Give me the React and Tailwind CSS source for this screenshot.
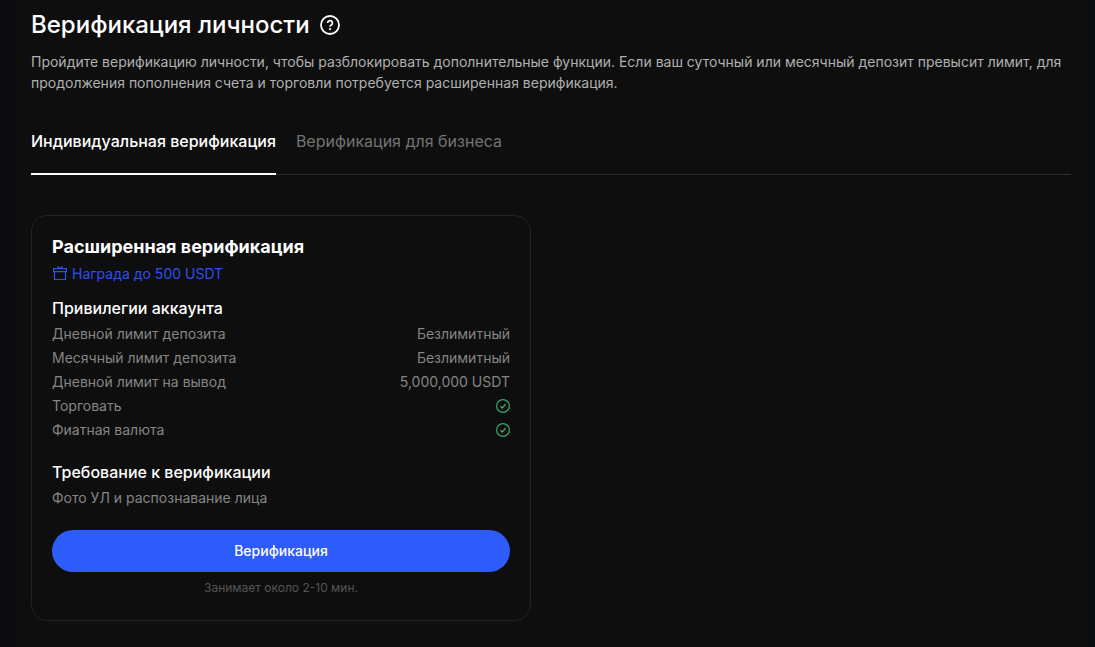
import { useState } from 'react';

const tabs = [
  { id: 'personal', label: 'Индивидуальная верификация' },
  { id: 'business', label: 'Верификация для бизнеса' },
];

const privileges = [
  { label: 'Дневной лимит депозита', value: 'Безлимитный' },
  { label: 'Месячный лимит депозита', value: 'Безлимитный' },
  { label: 'Дневной лимит на вывод', value: '5,000,000 USDT' },
  { label: 'Торговать', allowed: true },
  { label: 'Фиатная валюта', allowed: true },
];

function HelpIcon() {
  return (
    <svg className="w-5 h-5" viewBox="0 0 20 20" fill="none" stroke="currentColor" strokeWidth="1.8" aria-hidden="true">
      <circle cx="10" cy="10" r="9" />
      <path d="M7.6 8a2.4 2.4 0 1 1 3.7 2c-.8.5-1.3.8-1.3 1.7" />
      <circle cx="10" cy="14.1" r="1.1" fill="currentColor" stroke="none" />
    </svg>
  );
}

function GiftIcon() {
  return (
    <svg className="w-4 h-4" viewBox="0 0 16 16" fill="none" stroke="currentColor" strokeWidth="1.2" aria-hidden="true">
      <rect x="1.6" y="2.6" width="12.8" height="3" />
      <path d="M2.5 5.6v7.9h11V5.6" />
      <path d="M5.2.4 8 2.4 10.8.4" />
    </svg>
  );
}

function CheckIcon() {
  return (
    <svg className="w-3.5 h-3.5 text-[#3fa56c]" viewBox="0 0 14 14" fill="none" stroke="currentColor" role="img" aria-label="Доступно">
      <circle cx="7" cy="7" r="6.4" strokeWidth="1.2" />
      <path d="M4.4 7.2 6.2 8.9 9.6 5.2" strokeWidth="1.4" />
    </svg>
  );
}

function VerificationCard() {
  return (
    <section className="rounded-2xl border border-[#222227] px-5 pt-5 pb-6">
      <h2 className="text-lg leading-[22px] font-bold text-white">Расширенная верификация</h2>
      <a href="#reward" className="mt-1.5 flex w-fit items-center gap-1 text-sm leading-5 text-[#2f4ff0]">
        <GiftIcon />
        Награда до 500 USDT
      </a>

      <h3 className="mt-3 text-base leading-6 font-medium text-white">Привилегии аккаунта</h3>
      <dl className="mt-0.5 text-sm leading-6 text-[#858585]">
        {privileges.map((item) => (
          <div key={item.label} className="flex items-center justify-between">
            <dt>{item.label}</dt>
            <dd>{item.allowed ? <CheckIcon /> : item.value}</dd>
          </div>
        ))}
      </dl>

      <h3 className="mt-4.5 text-base leading-6 font-medium text-white">Требование к верификации</h3>
      <p className="mt-0.5 text-sm leading-6 text-[#858585]">Фото УЛ и распознавание лица</p>

      <button type="button" className="mt-5 h-[42px] w-full rounded-full bg-[#2e5cfa] text-sm font-medium text-white">
        Верификация
      </button>
      <p className="mt-2 text-center text-xs leading-4 text-[#555555]">Занимает около 2-10 мин.</p>
    </section>
  );
}

export default function App() {
  const [activeTab, setActiveTab] = useState('personal');

  return (
    <div className="min-h-screen bg-[#090b0d] pl-[15px] pr-2 font-['Inter',sans-serif]">
      <main className="min-h-screen bg-[#0e0e0e] px-4 pt-2 pb-6">
        <div className="flex items-center gap-2.5 text-white">
          <h1 className="text-2xl leading-[34px] font-medium">Верификация личности</h1>
          <button type="button" aria-label="Справка">
            <HelpIcon />
          </button>
        </div>
        <p className="mt-[9px] text-sm leading-[21px] text-[#b0b0b0]">
          Пройдите верификацию личности, чтобы разблокировать дополнительные функции. Если ваш суточный или месячный
          депозит превысит лимит, для продолжения пополнения счета и торговли потребуется расширенная верификация.
        </p>

        {/* Tabs */}
        <div role="tablist" className="mt-9 flex gap-5 border-b border-[#2b2b31]">
          {tabs.map((tab) => (
            <button
              key={tab.id}
              type="button"
              role="tab"
              aria-selected={activeTab === tab.id}
              onClick={() => setActiveTab(tab.id)}
              className={`-mb-px border-b-2 pb-5 text-base leading-6 ${
                activeTab === tab.id
                  ? 'border-white font-medium text-white'
                  : 'border-transparent text-[#737373]'
              }`}
            >
              {tab.label}
            </button>
          ))}
        </div>

        <div className="mt-10 grid grid-cols-2 gap-10">
          <VerificationCard />
        </div>
      </main>
    </div>
  );
}
